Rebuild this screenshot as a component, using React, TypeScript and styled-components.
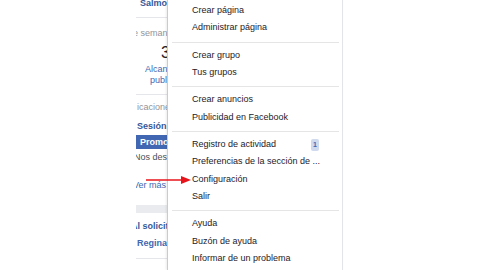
import React from "react";
import styled, { createGlobalStyle } from "styled-components";

const GlobalStyle = createGlobalStyle`
  html, body { margin: 0; padding: 0; background: #fff; }
  body { font-family: "Liberation Sans", Arial, Helvetica, sans-serif; }
`;

const Page = styled.div`
  position: relative;
  width: 480px;
  height: 270px;
  overflow: hidden;
  display: flex;
  background: #fff;
`;

const Gutter = styled.div`
  width: 136px;
  flex: none;
`;

const Side = styled.div`
  width: 31px;
  flex: none;
  overflow: hidden;
  display: flex;
  flex-direction: column;
  font-size: 9px;
`;

const Line = styled.div<{ $h: number; $color?: string; $bold?: boolean; $size?: number }>`
  height: ${(p) => p.$h}px;
  line-height: ${(p) => p.$h}px;
  flex: none;
  overflow: hidden;
  white-space: nowrap;
  color: ${(p) => p.$color || "#1d2129"};
  font-weight: ${(p) => (p.$bold ? 700 : 400)};
  font-size: ${(p) => p.$size || 9}px;
`;

const Shift = styled.span<{ $x: number }>`
  display: inline-block;
  margin-left: ${(p) => p.$x}px;
`;

const Rule = styled.div`
  height: 1px;
  background: #e5e6e9;
  flex: none;
`;

const Band = styled.div`
  height: 8px;
  background: #e9ebee;
  flex: none;
`;

const PromoButton = styled.div`
  height: 14px;
  line-height: 14px;
  background: #4267b2;
  color: #fff;
  font-weight: 700;
  font-size: 9px;
  padding-left: 4px;
  white-space: nowrap;
  overflow: hidden;
  flex: none;
`;

const Menu = styled.div`
  width: 174px;
  flex: none;
  background: #fff;
  border-left: 1px solid #c9cbd0;
  border-right: 1px solid #e3e4e7;
  box-shadow: -1px 0 2px rgba(0, 0, 0, 0.08);
  display: flex;
  flex-direction: column;
  padding-top: 2px;
`;

const Item = styled.div`
  height: 17.35px;
  line-height: 17.35px;
  padding-left: 24px;
  padding-right: 23px;
  font-size: 9px;
  color: #1d2129;
  white-space: nowrap;
  display: flex;
  align-items: center;
  justify-content: space-between;
`;

const Sep = styled.div`
  height: 1px;
  margin: 5px 3px 4px 4px;
  background: #e5e5e5;
`;

const Badge = styled.span`
  display: inline-block;
  width: 8px;
  height: 12px;
  line-height: 12px;
  border-radius: 2px;
  background: #cfdaee;
  color: #4267b2;
  font-size: 7px;
  font-weight: 700;
  text-align: center;
`;

const Arrow = styled.svg`
  position: absolute;
  left: 145px;
  top: 174px;
`;

const groups: { label: string; badge?: string }[][] = [
  [{ label: "Crear página" }, { label: "Administrar página" }],
  [{ label: "Crear grupo" }, { label: "Tus grupos" }],
  [{ label: "Crear anuncios" }, { label: "Publicidad en Facebook" }],
  [
    { label: "Registro de actividad", badge: "1" },
    { label: "Preferencias de la sección de ..." },
    { label: "Configuración" },
    { label: "Salir" },
  ],
  [{ label: "Ayuda" }, { label: "Buzón de ayuda" }, { label: "Informar de un problema" }],
];

export default function App() {
  return (
    <>
      <GlobalStyle />
      <Page>
        <Gutter />
        <Side>
          <Line $h={10} $color="#365899" $bold style={{ marginTop: -2 }}>
            <Shift $x={4}>Salmones</Shift>
          </Line>
          <Line $h={9} />
          <Rule />
          <Line $h={8} />
          <Line $h={14} $color="#90949c">
            <Shift $x={-3}>e semana</Shift>
          </Line>
          <Line $h={5} />
          <Line $h={16} $size={16}>
            <Shift $x={25}>3</Shift>
          </Line>
          <Line $h={3} />
          <Line $h={11} $color="#4267b2">
            <Shift $x={9}>Alcance</Shift>
          </Line>
          <Line $h={11} $color="#4267b2">
            <Shift $x={14}>publicación</Shift>
          </Line>
          <Line $h={8} />
          <Rule />
          <Line $h={6} />
          <Line $h={13} $color="#90949c">
            <Shift $x={1}>icaciones</Shift>
          </Line>
          <Line $h={6} />
          <Line $h={13} $color="#365899" $bold>
            <Shift $x={1}>Sesión "</Shift>
          </Line>
          <Line $h={2} />
          <PromoButton>Promocionar</PromoButton>
          <Line $h={2} />
          <Line $h={13} $color="#4b4f56">
            <Shift $x={-2}>Nos desconocían</Shift>
          </Line>
          <Line $h={15} />
          <Line $h={13} $color="#4267b2">
            <Shift $x={-3}>Ver más</Shift>
          </Line>
          <Line $h={13} />
          <Band />
          <Line $h={7} />
          <Line $h={13} $color="#365899" $bold>
            <Shift $x={-5}>Al solicitudes</Shift>
          </Line>
          <Line $h={4} />
          <Line $h={13} $color="#4267b2" $bold>
            <Shift $x={1}>Regina C</Shift>
          </Line>
          <Line $h={8} />
          <Rule />
        </Side>
        <Menu>
          {groups.map((g, gi) => (
            <React.Fragment key={gi}>
              {gi > 0 && <Sep />}
              {g.map((it) => (
                <Item key={it.label}>
                  <span>{it.label}</span>
                  {it.badge && <Badge>{it.badge}</Badge>}
                </Item>
              ))}
            </React.Fragment>
          ))}
        </Menu>
        <Arrow width="48" height="12" viewBox="0 0 48 12">
          <line x1="1" y1="6" x2="38" y2="6" stroke="#e8141b" strokeWidth="1.6" />
          <polygon points="36,2 46,6 36,10" fill="#e8141b" />
        </Arrow>
      </Page>
    </>
  );
}
